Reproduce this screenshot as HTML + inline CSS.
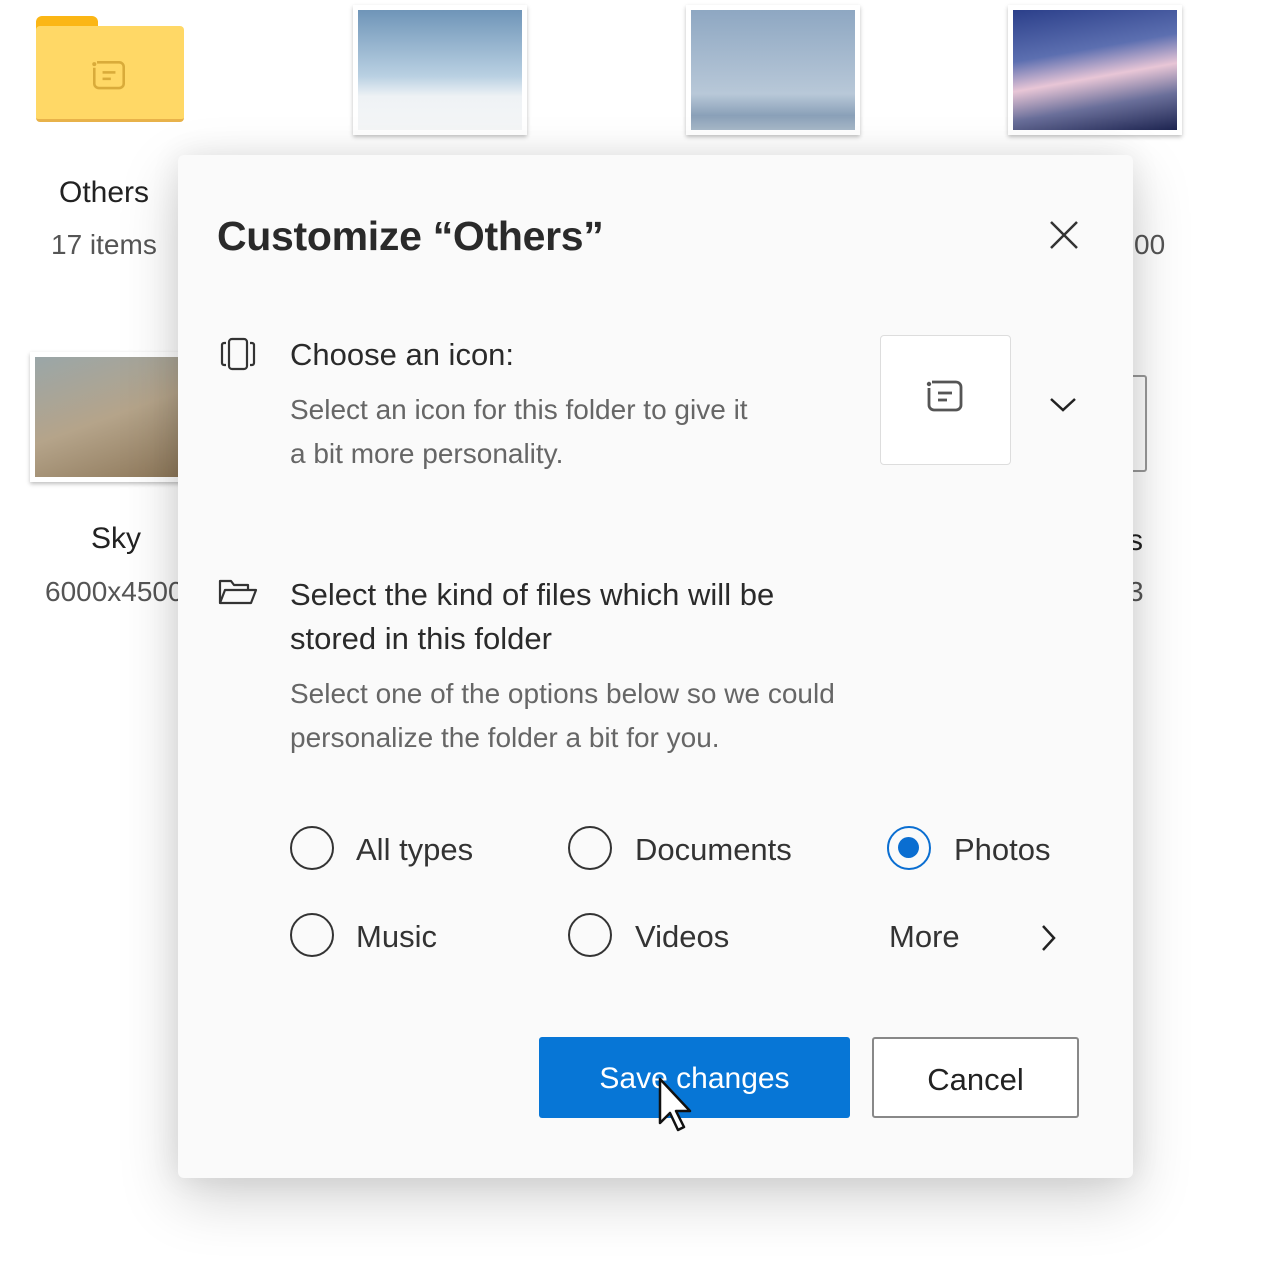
<!DOCTYPE html>
<html><head><meta charset="utf-8"><style>
*{margin:0;padding:0;box-sizing:border-box}
body{width:1285px;height:1277px;background:#fff;position:relative;overflow:hidden;font-family:"Segoe UI","Liberation Sans",sans-serif;color:#222}
.abs{position:absolute}
.thumb{position:absolute;background:#fff;padding:5px;box-shadow:0 2px 4px rgba(0,0,0,.25)}
.thumb div{width:100%;height:100%}
.dlg{position:absolute;left:178px;top:155px;width:955px;height:1023px;background:#fafafa;border-radius:6px;box-shadow:0 20px 60px rgba(0,0,0,.18),0 0 30px rgba(0,0,0,.08)}
.t{position:absolute;white-space:nowrap}
.radio{position:absolute;width:44px;height:44px;border:2.5px solid #333;border-radius:50%}
.lbl{position:absolute;font-size:31px;color:#333}
</style></head><body>
<!-- folder -->
<div class="abs" style="left:36px;top:16px;width:62px;height:22px;background:#fbb615;border-radius:6px 6px 0 0"></div>
<div class="abs" style="left:36px;top:26px;width:148px;height:96px;background:#ffd866;border-radius:4px;border-bottom:3px solid #e8b24a"></div>
<svg class="abs" style="left:86px;top:54px" width="46" height="46" viewBox="0 0 50 50"><path d="M12 9h24a5 5 0 0 1 5 5v18a5 5 0 0 1-5 5H14a5 5 0 0 1-5-5V15" fill="none" stroke="#d9ab3a" stroke-width="2.8"/><circle cx="9" cy="11" r="2.2" fill="#d9ab3a"/><line x1="18" y1="20" x2="32" y2="20" stroke="#d9ab3a" stroke-width="2.8"/><line x1="18" y1="27" x2="27" y2="27" stroke="#d9ab3a" stroke-width="2.8"/></svg>
<div class="t" style="left:59px;top:176px;font-size:30px;color:#222">Others</div>
<div class="t" style="left:51px;top:229px;font-size:28px;color:#555">17 items</div>
<div class="thumb" style="left:353px;top:5px;width:174px;height:130px"><div style="background:linear-gradient(#6f95b8,#b9d0e2 55%,#eef2f5 72%,#f5f6f7)"></div></div>
<div class="thumb" style="left:686px;top:5px;width:174px;height:130px"><div style="background:linear-gradient(#8ea7c2,#b8c8d8 70%,#8aa0b8 88%,#a7b8c8)"></div></div>
<div class="thumb" style="left:1008px;top:5px;width:174px;height:130px"><div style="background:linear-gradient(170deg,#2b3f8a,#5c6fb0 35%,#e8c6d6 55%,#6a6f9a 75%,#1d2450)"></div></div>
<div class="thumb" style="left:30px;top:352px;width:160px;height:130px"><div style="background:linear-gradient(160deg,#9aa6a8,#b5a48a 50%,#8c7658)"></div></div>
<div class="t" style="left:91px;top:522px;font-size:30px">Sky</div>
<div class="t" style="left:45px;top:576px;font-size:28px;color:#555">6000x4500</div>
<div class="t" style="left:1134px;top:229px;font-size:28px;color:#555">00</div>
<div class="abs" style="left:1120px;top:375px;width:27px;height:97px;border:2px solid #999;border-radius:3px"></div>
<div class="t" style="left:1128px;top:524px;font-size:30px">s</div>
<div class="t" style="left:1128px;top:576px;font-size:28px;color:#555">3</div>
<div class="dlg">
  <div class="t" style="left:39px;top:58px;font-size:41px;font-weight:bold;color:#2a2a2a;letter-spacing:-0.3px">Customize “Others”</div>
  <svg class="abs" style="left:870px;top:64px" width="32" height="32"><path d="M3 3L29 29M29 3L3 29" stroke="#333" stroke-width="2.5"/></svg>
  <svg class="abs" style="left:42px;top:182px" width="36" height="34"><rect x="9" y="2" width="18" height="30" rx="3" fill="none" stroke="#333" stroke-width="2.2"/><path d="M6 6H4a2 2 0 0 0-2 2v18a2 2 0 0 0 2 2h2M30 6h2a2 2 0 0 1 2 2v18a2 2 0 0 1-2 2h-2" fill="none" stroke="#333" stroke-width="2.2"/></svg>
  <div class="t" style="left:112px;top:182px;font-size:31px;color:#2a2a2a">Choose an icon:</div>
  <div class="t" style="left:112px;top:233px;font-size:28px;color:#666;line-height:44px">Select an icon for this folder to give it<br>a bit more personality.</div>
  <div class="abs" style="left:702px;top:180px;width:131px;height:130px;background:#fff;border:1px solid #ddd;border-radius:4px"></div>
  <svg class="abs" style="left:742px;top:218px" width="50" height="50" viewBox="0 0 50 50"><path d="M12 9h24a5 5 0 0 1 5 5v18a5 5 0 0 1-5 5H14a5 5 0 0 1-5-5V15" fill="none" stroke="#555" stroke-width="2.8"/><circle cx="9" cy="11" r="2.2" fill="#555"/><line x1="18" y1="20" x2="32" y2="20" stroke="#555" stroke-width="2.8"/><line x1="18" y1="27" x2="27" y2="27" stroke="#555" stroke-width="2.8"/></svg>
  <svg class="abs" style="left:870px;top:240px" width="30" height="20"><path d="M3 4l12 11 12-11" fill="none" stroke="#222" stroke-width="2.5"/></svg>
  <svg class="abs" style="left:40px;top:422px" width="40" height="30"><path d="M2 26V4h11l3 4h14v5M2 26l5-13h31l-5 13z" fill="none" stroke="#333" stroke-width="2.2" stroke-linejoin="round"/></svg>
  <div class="t" style="left:112px;top:418px;font-size:31px;color:#2a2a2a;line-height:44px">Select the kind of files which will be<br>stored in this folder</div>
  <div class="t" style="left:112px;top:517px;font-size:28px;color:#666;line-height:44px">Select one of the options below so we could<br>personalize the folder a bit for you.</div>
  <div class="radio" style="left:112px;top:671px"></div><div class="lbl" style="left:178px;top:677px">All types</div>
  <div class="radio" style="left:390px;top:671px"></div><div class="lbl" style="left:457px;top:677px">Documents</div>
  <div class="radio" style="left:709px;top:671px;border-color:#0a6ed1"><div style="position:absolute;left:9px;top:9px;width:21px;height:21px;border-radius:50%;background:#0a6ed1"></div></div><div class="lbl" style="left:776px;top:677px">Photos</div>
  <div class="radio" style="left:112px;top:758px"></div><div class="lbl" style="left:178px;top:764px">Music</div>
  <div class="radio" style="left:390px;top:758px"></div><div class="lbl" style="left:457px;top:764px">Videos</div>
  <div class="lbl" style="left:711px;top:764px">More</div>
  <svg class="abs" style="left:860px;top:768px" width="20" height="30"><path d="M5 3l11 12-11 12" fill="none" stroke="#222" stroke-width="2.5"/></svg>
  <div class="abs" style="left:361px;top:882px;width:311px;height:81px;background:#0776d6;border-radius:3px;color:#fff;font-size:30px;text-align:center;line-height:84px">Save changes</div>
  <div class="abs" style="left:694px;top:882px;width:207px;height:81px;background:#fff;border:2px solid #888;border-radius:3px;color:#222;font-size:31px;text-align:center;line-height:82px">Cancel</div>
  <svg class="abs" style="left:480px;top:922px" width="40" height="60"><path d="M2 2v44l10-10 8 17 6-3-8-16h14z" fill="#fff" stroke="#111" stroke-width="2.5" stroke-linejoin="round"/></svg>
</div>
</body></html>
